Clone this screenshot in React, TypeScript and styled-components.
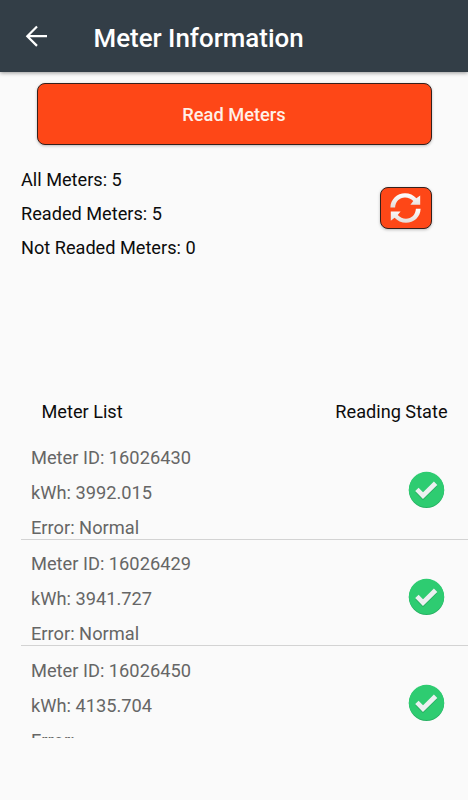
import React from "react";
import styled, { createGlobalStyle } from "styled-components";

const GlobalStyle = createGlobalStyle`
  * { box-sizing: border-box; }
  body { margin: 0; background: #fafafa; }
`;

const Screen = styled.div`
  width: 468px;
  height: 800px;
  overflow: hidden;
  display: flex;
  flex-direction: column;
  background: #fafafa;
  color: #0c0c0c;
  font-family: Roboto, "Liberation Sans", sans-serif;
  font-size: 18.15px;
  line-height: 21px;
`;

const AppBar = styled.header`
  flex: none;
  height: 72px;
  padding: 2px 0 0 23px;
  display: flex;
  align-items: center;
  gap: 42.5px;
  background: #333e47;
  box-shadow: 0 1px 4px rgba(0, 0, 0, 0.4);
`;

const BackButton = styled.button`
  width: 28px;
  height: 28px;
  padding: 0;
  border: 0;
  background: none;
  svg { display: block; }
`;

const Title = styled.h1`
  margin: 0;
  padding-top: 1px;
  color: #fff;
  font-size: 25.9px;
  line-height: 32px;
  font-weight: 500;
  white-space: nowrap;
`;

const OrangeButton = styled.button`
  display: flex;
  align-items: center;
  justify-content: center;
  padding: 0;
  border: 1px solid #35201c;
  border-radius: 8px;
  background: #fe4717;
  box-shadow: 0 1px 3px rgba(0, 0, 0, 0.25);
`;

const ReadButton = styled(OrangeButton)`
  flex: none;
  height: 62px;
  margin: 11px 36.5px 0;
  padding-top: 1px;
  color: #fff0e8;
  font: 500 18.25px/21px Roboto, "Liberation Sans", sans-serif;
`;

const RefreshButton = styled(OrangeButton)`
  width: 52px;
  height: 42px;
  margin-top: 19px;
`;

const Summary = styled.section`
  flex: none;
  height: 233px;
  padding: 23px 36.5px 0 21px;
  display: flex;
  justify-content: space-between;
  align-items: flex-start;
`;

const Totals = styled.div`
  padding-top: 0.6px;
  display: flex;
  flex-direction: column;
  gap: 13.3px;
`;

const ListHeader = styled.div`
  flex: none;
  height: 55px;
  padding: 23px 20.5px 0 41.5px;
  display: flex;
  justify-content: space-between;
`;

const List = styled.div`
  flex: none;
  height: 305px;
  overflow: hidden;
  margin-left: 21px;
  font-size: 18.25px;
`;

const Row = styled.div`
  height: 106.5px;
  padding: 13.6px 23.2px 0 10px;
  display: flex;
  justify-content: space-between;
  border-bottom: 1px solid #d3d3d3;
  color: #666;
`;

const Details = styled.div`
  display: flex;
  flex-direction: column;
  gap: 14px;
`;

const Line = styled.span`
  white-space: nowrap;
`;

const State = styled.svg`
  display: block;
  margin-top: 24.6px;
`;

const meters = [
  { id: "16026430", kwh: "3992.015", error: "Normal" },
  { id: "16026429", kwh: "3941.727", error: "Normal" },
  { id: "16026450", kwh: "4135.704", error: "" },
];

const ReadOk = () => (
  <State width="37" height="38" viewBox="0 0 37 38">
    <circle cx="18.5" cy="19.3" r="17.7" fill="#27b163" />
    <circle cx="18.5" cy="18.4" r="17.6" fill="#2ecc71" />
    <path d="M8.9 19.6 L15 25.8 L27.6 13.4" fill="none" stroke="#27ae60" strokeWidth="4.8" />
    <path d="M8.9 18.4 L15 24.6 L27.6 12.2" fill="none" stroke="#ecf0f1" strokeWidth="4.8" />
  </State>
);

const RefreshIcon = () => (
  <svg width="33" height="33" viewBox="0 0 33 33">
    <defs>
      <linearGradient id="silver" x1="0" y1="0" x2="0" y2="1">
        <stop offset="0" stopColor="#fff" />
        <stop offset="1" stopColor="#e3dcd8" />
      </linearGradient>
    </defs>
    <g fill="url(#silver)">
      <path d="M1.4 15.6 C1.5 7.3 8.2 1.3 16 1.3 C20.6 1.3 24.6 3.2 27.4 6.3 L31.2 3.6 V12.7 H21.4 L24.3 9 C22 6.6 19.2 5.4 16 5.4 C10.4 5.4 6.4 9.6 6.1 15.6 Z" />
      <path d="M31.6 16.8 C31.5 25.2 24.8 30.8 17 30.8 C12.4 30.8 8.4 28.9 5.6 25.8 L1.8 28.7 V19.6 H11.6 L8.7 23.1 C11 25.5 13.8 26.7 17 26.7 C22.6 26.7 26.6 22.7 26.9 16.8 Z" />
    </g>
  </svg>
);

export default function App() {
  return (
    <Screen>
      <GlobalStyle />
      <AppBar>
        <BackButton aria-label="Back">
          <svg width="28" height="28" viewBox="0 0 28 28" fill="none" stroke="#fff" strokeWidth="2.2">
            <path d="M24 13.2 H5 M14 3.5 L4.3 13.2 L14 22.9" />
          </svg>
        </BackButton>
        <Title>Meter Information</Title>
      </AppBar>
      <ReadButton>Read Meters</ReadButton>
      <Summary>
        <Totals>
          <Line>All Meters: 5</Line>
          <Line>Readed Meters: 5</Line>
          <Line>Not Readed Meters: 0</Line>
        </Totals>
        <RefreshButton aria-label="Refresh">
          <RefreshIcon />
        </RefreshButton>
      </Summary>
      <ListHeader>
        <Line>Meter List</Line>
        <Line>Reading State</Line>
      </ListHeader>
      <List>
        {meters.map((m) => (
          <Row key={m.id}>
            <Details>
              <Line>Meter ID: {m.id}</Line>
              <Line>kWh: {m.kwh}</Line>
              <Line>Error: {m.error}</Line>
            </Details>
            <ReadOk />
          </Row>
        ))}
      </List>
    </Screen>
  );
}
